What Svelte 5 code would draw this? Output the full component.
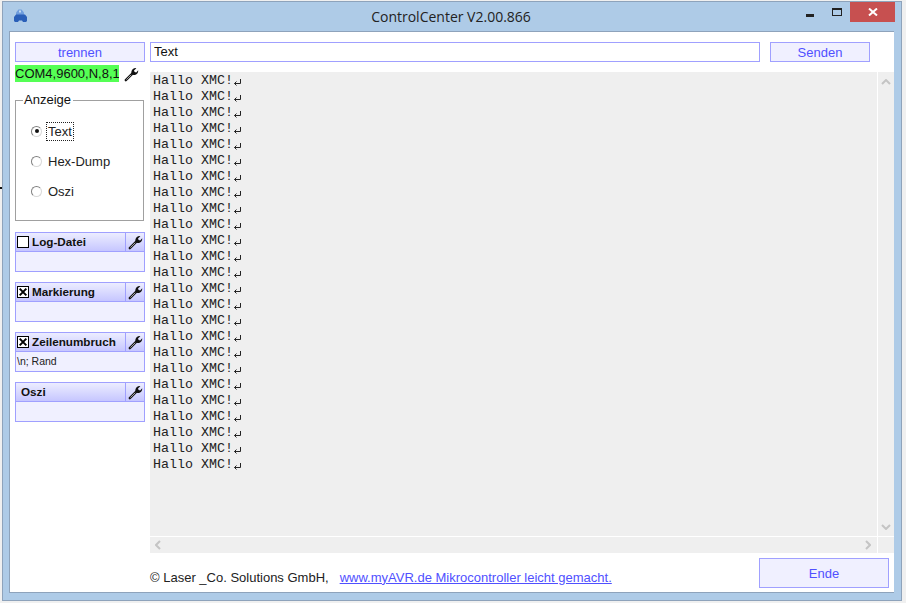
<script lang="ts">
	// Terminal window: connection sidebar on the left, output log on the right
	const lines = Array.from({ length: 25 }, () => 'Hallo XMC!');

	const modes = ['Text', 'Hex-Dump', 'Oszi'];
	let mode = $state('Text');

	const panels = [
		{ title: 'Log-Datei', check: 'off', body: '' },
		{ title: 'Markierung', check: 'on', body: '' },
		{ title: 'Zeilenumbruch', check: 'on', body: '\\n; Rand' },
		{ title: 'Oszi', check: 'none', body: '' }
	];
</script>

{#snippet wrench()}
	<svg class="wrench" width="15" height="15" viewBox="0 0 15 15">
		<path d="M1.8 13.2 L8.6 6.4" stroke="#111" stroke-width="2.4" stroke-linecap="round" fill="none" />
		<path d="M7.4 6.4 C7 4 8.2 1.6 11 1 L12.4 1.2 L10 3.4 L10.6 5 L12.2 5.4 L14.2 3.2 C14.4 6 12.4 8.2 9.4 8 Z" fill="#111" />
		<path d="M2.4 12.6 L7.2 7.8" stroke="#c8c8c8" stroke-width="0.8" fill="none" />
	</svg>
{/snippet}

<div class="cursor-tip"></div>

<div class="window">
	<header class="titlebar">
		<svg class="app-icon" width="15" height="14" viewBox="0 0 15 14">
			<path d="M5.5 0.5 h3 l2.5 3 v3 h-8 v-3 z" fill="#6f9ddd" />
			<path d="M6 1.5 h2 v2 h-2 z" fill="#c4daf2" />
			<path d="M1 8 l2-2.5 h9 l2 2.5 v4 l-1 1 h-3 l-1-1.5 h-3 l-1 1.5 h-3 l-1-1 z" fill="#2a5fb8" />
		</svg>
		<span class="title">ControlCenter V2.00.866</span>
		<div class="caption">
			<span class="cap-min"></span>
			<span class="cap-max"></span>
			<button class="cap-close" aria-label="Schließen">
				<svg width="10" height="8" viewBox="0 0 10 8">
					<path d="M1 0.5 L9 7.5 M9 0.5 L1 7.5" stroke="#fff" stroke-width="2" fill="none" />
				</svg>
			</button>
		</div>
	</header>

	<div class="client">
		<aside class="sidebar">
			<button class="btn connect">trennen</button>
			<div class="port">
				<span class="port-label">COM4,9600,N,8,1</span>
				{@render wrench()}
			</div>

			<fieldset class="display">
				<legend>Anzeige</legend>
				{#each modes as m}
					<label class="radio">
						<input type="radio" name="mode" value={m} bind:group={mode} />
						<span class="dot" class:checked={mode === m}></span>
						<span class="radio-text" class:focused={mode === m}>{m}</span>
					</label>
				{/each}
			</fieldset>

			{#each panels as p}
				<section class="panel">
					<div class="panel-head">
						<div class="panel-title">
							{#if p.check !== 'none'}
								<span class="check">
									{#if p.check === 'on'}
										<svg width="12" height="12" viewBox="0 0 12 12">
											<path d="M2 2 L10 10 M10 2 L2 10" stroke="#000" stroke-width="2.4" fill="none" />
										</svg>
									{/if}
								</span>
							{/if}
							<b class:plain={p.check === 'none'}>{p.title}</b>
						</div>
						<div class="panel-tool">{@render wrench()}</div>
					</div>
					<div class="panel-body">{p.body}</div>
				</section>
			{/each}
		</aside>

		<main class="main">
			<div class="send-row">
				<input class="send-input" type="text" value="Text" />
				<button class="btn send">Senden</button>
			</div>

			<div class="log">
				<div class="log-text">
					{#each lines as line}
						<div class="log-line">{line}<svg width="9" height="9" viewBox="0 0 9 9"><path d="M7.5 1 V5.5 H1.5 M3.5 3.5 L1.5 5.5 L3.5 7.5" stroke="#222" stroke-width="1" fill="none" /></svg></div>
					{/each}
				</div>
				<div class="vbar">
					<svg width="10" height="6" viewBox="0 0 10 6"><path d="M1 5 L5 1 L9 5" stroke="#c4c4c4" stroke-width="2" fill="none" /></svg>
					<svg width="10" height="6" viewBox="0 0 10 6"><path d="M1 1 L5 5 L9 1" stroke="#c4c4c4" stroke-width="2" fill="none" /></svg>
				</div>
				<div class="hbar">
					<svg width="6" height="10" viewBox="0 0 6 10"><path d="M5 1 L1 5 L5 9" stroke="#c4c4c4" stroke-width="2" fill="none" /></svg>
					<svg width="6" height="10" viewBox="0 0 6 10"><path d="M1 1 L5 5 L1 9" stroke="#c4c4c4" stroke-width="2" fill="none" /></svg>
				</div>
				<div class="corner"></div>
			</div>

			<footer class="footer">
				<span class="copy">© Laser _Co. Solutions GmbH,</span>
				<a class="link" href="#top">www.myAVR.de Mikrocontroller leicht gemacht.</a>
				<button class="btn end">Ende</button>
			</footer>
		</main>
	</div>
</div>

<style>
	:global(body) {
		background: #f0f0f0;
		font-family: 'Liberation Sans', Arial, sans-serif;
	}

	.cursor-tip {
		position: absolute;
		left: 0;
		top: 187px;
		width: 2px;
		height: 2px;
		background: #111;
		z-index: 2;
	}

	.window {
		box-sizing: border-box;
		width: 900px;
		height: 600px;
		margin: 1px 0 0 2px;
		display: flex;
		flex-direction: column;
		background: #aecbe7;
		border: 1px solid #8ea3bb;
	}

	.titlebar {
		position: relative;
		height: 29px;
		flex: none;
	}

	.app-icon {
		position: absolute;
		left: 10px;
		top: 7px;
	}

	.title {
		display: block;
		text-align: center;
		padding: 6px 2px 0 0;
		font-family: 'Open Sans', sans-serif;
		font-size: 14px;
		line-height: 18px;
		color: #222;
	}

	.caption {
		position: absolute;
		top: 0;
		right: 6px;
		display: flex;
		align-items: flex-start;
	}

	.cap-min {
		width: 8px;
		height: 3px;
		margin: 12px 18px 0 0;
		background: #222;
	}

	.cap-max {
		box-sizing: border-box;
		width: 10px;
		height: 8px;
		margin: 6px 8px 0 0;
		border: 1px solid #222;
		border-top-width: 2px;
	}

	.cap-close {
		width: 45px;
		height: 20px;
		padding: 0;
		border: none;
		background: #c75050;
		display: flex;
		align-items: center;
		justify-content: center;
	}

	.client {
		flex: 1;
		display: flex;
		margin: 0 7px 7px 6px;
		background: #fff;
		border: 1px solid #8ea3bb;
		border-right: none;
	}

	.sidebar {
		width: 130px;
		flex: none;
		padding: 10px 0 0 5px;
		margin-right: 5px;
	}

	.btn {
		box-sizing: border-box;
		padding: 1px 0 0 0;
		background: #f0f0ff;
		border: 1px solid #a0a0ff;
		color: #5050ff;
		font-family: 'Liberation Sans', Arial, sans-serif;
		font-size: 13px;
	}

	.connect {
		display: block;
		width: 130px;
		height: 20px;
	}

	.port {
		display: flex;
		align-items: center;
		margin-top: 3px;
		height: 17px;
	}

	.port-label {
		width: 104px;
		height: 17px;
		background: #55ff55;
		font-size: 13px;
		line-height: 18px;
		color: #111;
		white-space: nowrap;
		overflow: hidden;
	}

	.port .wrench {
		margin: 1px 0 0 5px;
	}

	.display {
		box-sizing: border-box;
		width: 129px;
		height: 128px;
		margin: 11px 0 11px 0;
		padding: 14px 0 0 15px;
		border: 1px solid #a0a0a0;
		min-inline-size: 0;
	}

	legend {
		margin-left: -8px;
		padding: 0 2px 0 1px;
		font-size: 13px;
		line-height: 14px;
		color: #111;
	}

	.radio {
		display: flex;
		align-items: center;
		height: 20px;
		margin-bottom: 10px;
		font-size: 13px;
		color: #222;
	}

	.radio input {
		display: none;
	}

	.dot {
		box-sizing: border-box;
		position: relative;
		width: 11px;
		height: 11px;
		margin-right: 4px;
		background: #fff;
		border: 1px solid;
		border-color: #808080 #d8d8d8 #d8d8d8 #808080;
		border-radius: 50%;
	}

	.dot.checked::after {
		content: '';
		position: absolute;
		left: 2.5px;
		top: 2.5px;
		width: 4px;
		height: 4px;
		background: #111;
		border-radius: 50%;
	}

	.radio-text {
		padding: 1px;
		line-height: 15px;
		border: 1px dotted transparent;
	}

	.radio-text.focused {
		border-color: #222;
	}

	.panel {
		box-sizing: border-box;
		width: 130px;
		height: 40px;
		margin-bottom: 10px;
		background: #f0f0ff;
		border: 1px solid #a0a0ff;
	}

	.panel-head {
		display: flex;
		height: 18px;
		background: linear-gradient(#ecedff, #c6c6ff);
		border-bottom: 1px solid #a0a0ff;
	}

	.panel-title {
		flex: 1;
		display: flex;
		align-items: center;
		gap: 3px;
		padding-left: 1px;
		font-size: 11.7px;
		color: #111;
	}

	.panel-title b {
		margin-top: -2px;
	}

	.panel-title b.plain {
		padding-left: 4px;
	}

	.check {
		box-sizing: border-box;
		display: flex;
		width: 12px;
		height: 12px;
		background: #fff;
		border: 1px solid #000;
		align-items: center;
		justify-content: center;
	}

	.panel-tool {
		width: 18px;
		display: flex;
		align-items: center;
		justify-content: center;
		border-left: 1px solid #a0a0ff;
	}

	.panel-body {
		padding: 2px 0 0 1px;
		font-size: 10.5px;
		line-height: 14px;
		color: #222;
	}

	.main {
		flex: 1;
		min-width: 0;
		display: flex;
		flex-direction: column;
		padding-top: 10px;
	}

	.send-row {
		display: flex;
		gap: 10px;
		height: 20px;
		flex: none;
	}

	.send-input {
		box-sizing: border-box;
		width: 610px;
		height: 20px;
		padding: 0 3px 1px 3px;
		background: #fff;
		border: 1px solid #a0a0ff;
		border-radius: 0;
		outline: none;
		font-family: 'Liberation Sans', Arial, sans-serif;
		font-size: 13px;
		color: #111;
	}

	.send {
		width: 100px;
		height: 20px;
	}

	.log {
		display: grid;
		grid-template-columns: 1fr 16px;
		grid-template-rows: 464px 16px;
		gap: 1px;
		margin-top: 10px;
		background: #fff;
	}

	.log-text {
		padding: 1px 0 0 3px;
		background: #efefef;
		overflow: hidden;
	}

	.log-line {
		display: flex;
		align-items: center;
		height: 16px;
		font-family: 'Liberation Mono', 'Courier New', monospace;
		font-size: 13.33px;
		line-height: 16px;
		color: #222;
		white-space: pre;
	}

	.log-line svg {
		margin: 2px 0 0 0;
	}

	.vbar {
		display: flex;
		flex-direction: column;
		align-items: center;
		justify-content: space-between;
		padding: 7px 0 6px 0;
		background: #efefef;
	}

	.hbar {
		display: flex;
		align-items: center;
		justify-content: space-between;
		padding: 0 6px 0 5px;
		background: #efefef;
	}

	.corner {
		background: #efefef;
	}

	.footer {
		position: relative;
		display: flex;
		align-items: center;
		flex: 1;
		padding-top: 9px;
		font-size: 13px;
	}

	.copy {
		color: #222;
	}

	.link {
		margin-left: 11px;
		color: #5050ff;
	}

	.end {
		position: absolute;
		right: 5px;
		top: 5px;
		width: 130px;
		height: 30px;
	}
</style>
